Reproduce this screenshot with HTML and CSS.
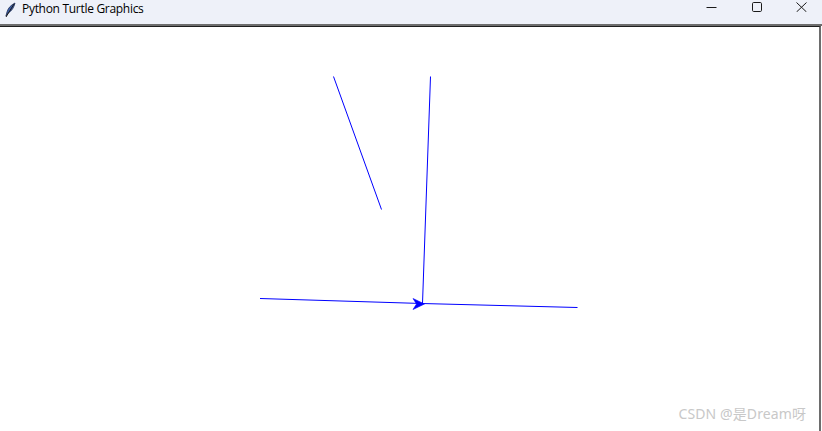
FILE: index.html
```html
<!DOCTYPE html>
<html>
<head>
<meta charset="utf-8">
<link rel="stylesheet" href="styles.css">
</head>
<body>
<div class="window">
  <div class="titlebar">
    <svg class="feather" width="14" height="16" viewBox="0 0 14 16">
      <path d="M12 1 C8 3 5 6 4 10 L3 14 L5 11 C9 9 11 5 12 1 Z" fill="#3b5ea8" stroke="#1f2f55" stroke-width="0.8"/>
      <path d="M11 2 L3 15" stroke="#1a1a1a" stroke-width="1"/>
    </svg>
    <span class="title">Python Turtle Graphics</span>
    <div class="controls">
      <div class="ctl ctl-min">
        <svg width="12" height="12" viewBox="0 0 12 12"><path d="M0.5 7.5 H10.5" stroke="#1a1a1a" stroke-width="1"/></svg>
      </div>
      <div class="ctl ctl-max">
        <svg width="12" height="12" viewBox="0 0 12 12"><rect x="0.5" y="2.5" width="9" height="9" rx="1.2" fill="none" stroke="#1a1a1a" stroke-width="1"/></svg>
      </div>
      <div class="ctl ctl-close">
        <svg width="12" height="12" viewBox="0 0 12 12"><path d="M0.5 2.5 L10.5 12 M10.5 2.5 L0.5 12" stroke="#1a1a1a" stroke-width="1"/></svg>
      </div>
    </div>
  </div>
  <div class="frame">
    <div class="canvas">
      <svg class="drawing" width="819" height="404" viewBox="0 27 819 404">
        <g stroke="#0000ff" stroke-width="1" fill="none">
          <line x1="333.5" y1="76.5" x2="381.5" y2="209.5"/>
          <line x1="430.5" y1="76.5" x2="422.5" y2="303.5"/>
          <line x1="260" y1="298.5" x2="422" y2="303.5"/>
          <line x1="422" y1="303.5" x2="577.5" y2="307.5"/>
        </g>
        <polygon points="424.5,304 413,298.5 416.5,304 413,309.5" fill="#0000ff" stroke="#0000ff" stroke-width="0.6"/>
      </svg>
      <div class="watermark">CSDN @是Dream呀</div>
    </div>
  </div>
</div>
</body>
</html>
```

FILE: styles.css
```css
html, body {
  margin: 0;
  padding: 0;
  background: #ffffff;
}
.window {
  width: 822px;
  height: 431px;
  overflow: hidden;
  display: flex;
  flex-direction: column;
  position: relative;
}
.titlebar {
  height: 24px;
  background: #eef1f9;
  display: flex;
  align-items: center;
  flex-shrink: 0;
}
.feather {
  margin-left: 3px;
  margin-top: -4px;
}
.title {
  margin-left: 5px;
  font-family: "Open Sans", "Noto Sans", sans-serif;
  font-size: 12px;
  color: #000000;
  margin-top: -8px;
  letter-spacing: -0.3px;
}
.controls {
  margin-left: auto;
  display: flex;
  height: 24px;
  align-self: flex-start;
}
.ctl {
  height: 14px;
  display: flex;
  justify-content: center;
  align-items: flex-start;
}
.ctl svg {
  display: block;
  margin-left: 1px;
}
.ctl-min { width: 45px; }
.ctl-max { width: 46px; }
.ctl-close { width: 42px; }
.frame {
  flex: 1;
  border-top: 2px solid #6d6d6d;
  display: flex;
}
.canvas {
  position: relative;
  width: 819px;
  border-top: 1px solid #1e1e1e;
  border-right: 2px solid #6d6d6d;
  background: #ffffff;
  flex-shrink: 0;
}
.drawing {
  display: block;
}
.watermark {
  position: absolute;
  right: 13px;
  bottom: 8px;
  font-family: "Noto Sans", "Noto Sans CJK SC", sans-serif;
  font-size: 14px;
  color: #c8c8c8;
  letter-spacing: 0.1px;
}
```
